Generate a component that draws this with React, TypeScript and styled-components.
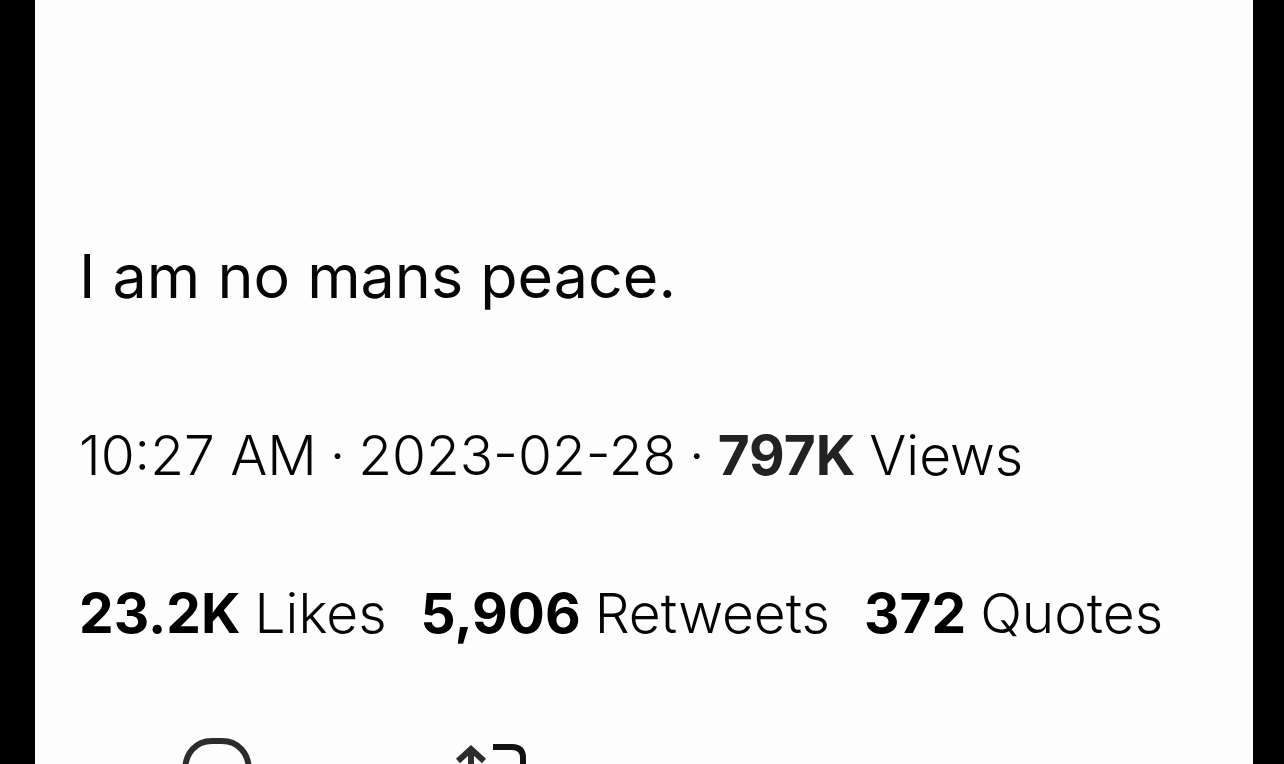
import React from "react";
import styled, { createGlobalStyle } from "styled-components";

const GlobalStyle = createGlobalStyle`
  *, *::before, *::after { box-sizing: border-box; }
  body {
    margin: 0;
    background: #000;
    color: #050505;
    font-family: Inter, "Liberation Sans", sans-serif;
  }
`;

const Page = styled.main`
  height: 100vh;
  overflow: hidden;
  padding: 0 31px 0 35px;
  background: #000;
`;

const Post = styled.article`
  min-height: 100%;
  padding: 236px 44px 0;
  background: #fdfdfd;
`;

const Message = styled.p`
  margin: 0 0 99px;
  font-size: 61px;
  line-height: 80px;
  white-space: nowrap;
`;

const Line = styled.div<{ $after: number }>`
  display: flex;
  gap: 13px;
  margin-bottom: ${(p) => p.$after}px;
  font-size: 55px;
  font-weight: 300;
  line-height: 80px;
  white-space: nowrap;
`;

const Stats = styled(Line)`
  gap: 34px;
`;

const Posted = styled.time`
  display: flex;
  gap: 13px;
`;

const Stat = styled.a`
  display: flex;
  gap: 14px;
  color: inherit;
  text-decoration: none;
`;

const Count = styled.strong<{ $soft?: boolean }>`
  font-weight: 700;
  color: ${(p) => (p.$soft ? "#222" : "#000")};
`;

const Actions = styled.div`
  display: flex;
  gap: 194px;
  padding-left: 98px;
`;

const Action = styled.button`
  display: block;
  width: 80px;
  height: 80px;
  padding: 0;
  border: 0;
  background: none;
  color: #2c2c2c;

  svg { display: block; }
`;

export default function App() {
  return (
    <>
      <GlobalStyle />
      <Page>
        <Post>
          <Message>I am no mans peace.</Message>
          <Line $after={78}>
            <Posted dateTime="2023-02-28T10:27">
              <span>10:27 AM</span>
              <span>·</span>
              <span>2023-02-28</span>
            </Posted>
            <span>·</span>
            <Stat href="#views"><Count $soft>797K</Count><span>Views</span></Stat>
          </Line>
          <Stats as="nav" $after={81}>
            <Stat href="#likes"><Count>23.2K</Count><span>Likes</span></Stat>
            <Stat href="#retweets"><Count>5,906</Count><span>Retweets</span></Stat>
            <Stat href="#quotes"><Count>372</Count><span>Quotes</span></Stat>
          </Stats>
          <Actions>
            <Action aria-label="Reply">
              <svg width="80" height="80" viewBox="0 0 80 80" fill="none" stroke="currentColor" strokeWidth="6">
                <path d="M8 37C8 19 19 7 35 7H45C61 7 72 19 72 37C72 50 64 59 40 72V63C20 63 8 54 8 37Z" />
              </svg>
            </Action>
            <Action aria-label="Retweet">
              <svg width="80" height="80" viewBox="0 0 80 80" fill="none" stroke="currentColor" strokeWidth="6">
                <path d="M7 27L20 15L33 27M20 16V54Q20 63 29 63H40" />
                <path d="M42 13H61Q72 13 72 24V62M59 50L72 63L85 50" stroke="#111" />
              </svg>
            </Action>
          </Actions>
        </Post>
      </Page>
    </>
  );
}
